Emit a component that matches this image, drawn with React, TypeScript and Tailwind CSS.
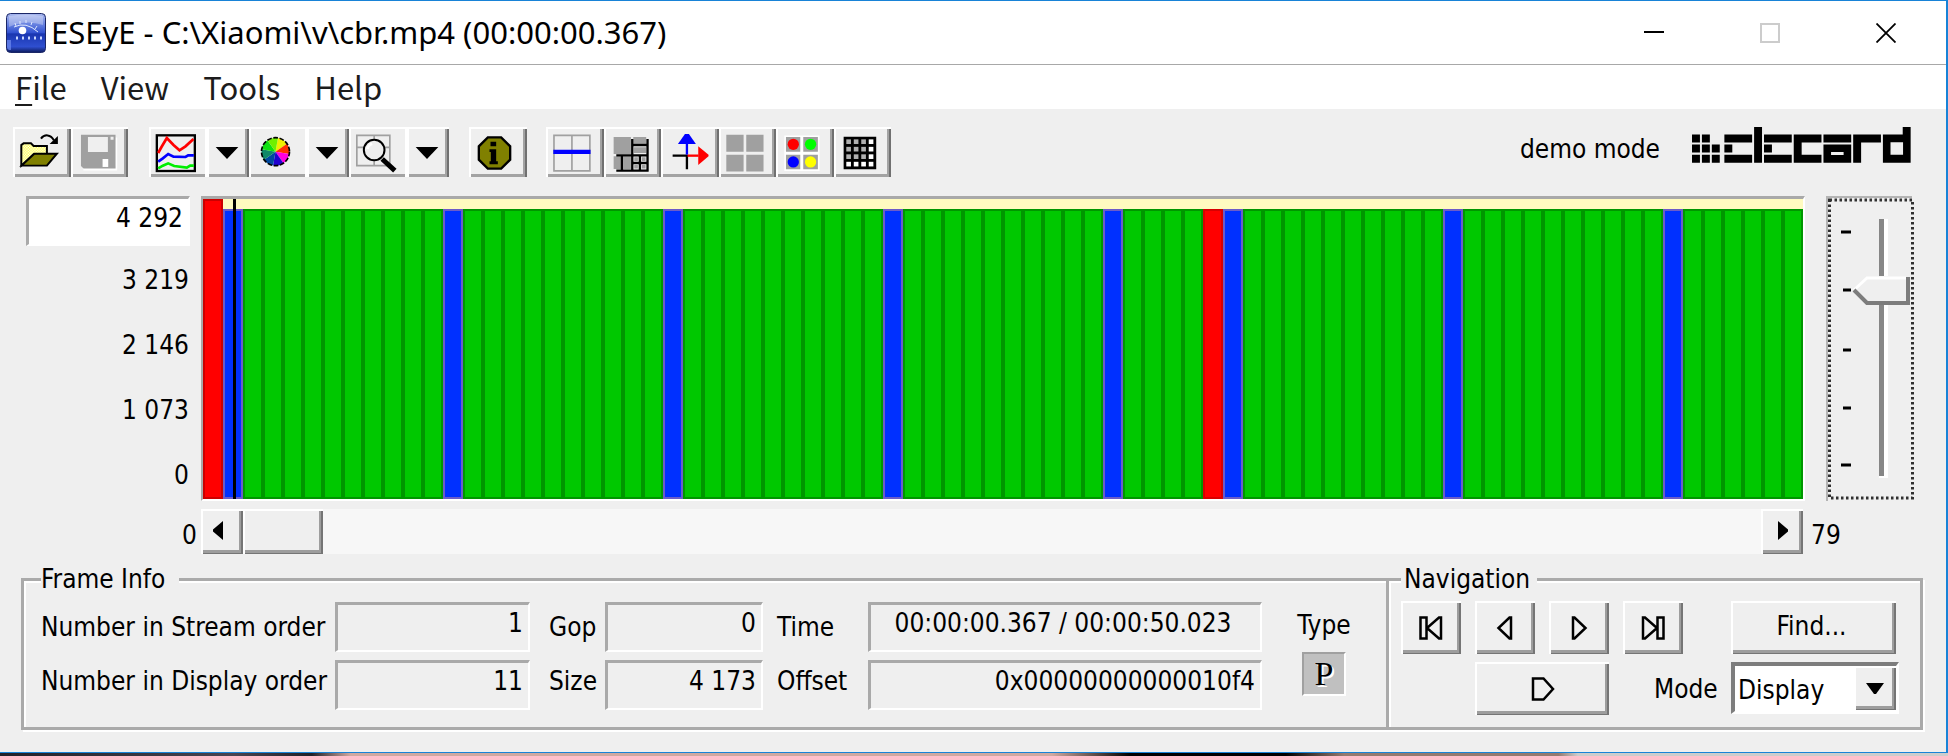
import React, { useState } from "react";

const RAISED =
  "bg-[#efefef] shadow-[inset_2px_2px_0_#ffffff,inset_-2px_-1px_0_#757575,inset_-4px_-4px_0_#9d9d9d]";
const TOOL =
  "block h-[50px] w-full bg-[#efefef] shadow-[inset_2px_2px_0_#ffffff,inset_-2px_0_0_#707070,inset_-4px_-3px_0_#a3a3a3]";
const TOOL_FLAT =
  "block h-[50px] w-full bg-[#efefef] shadow-[inset_2px_2px_0_#ffffff,inset_-2px_0_0_#ffffff,inset_0_-3px_0_#a3a3a3]";
const SUNKEN =
  "block h-[50px] border-t-[3px] border-l-[3px] border-r-2 border-b-2 border-t-[#a9a9a9] border-l-[#a9a9a9] border-r-white border-b-white pr-[5px] leading-[36px]";
const GROUP =
  "min-w-0 border-[3px] border-[#aaaaaa] shadow-[2px_2px_0_#ffffff,inset_2px_2px_0_#ffffff]";
const LEGEND = "bg-[#efefef] leading-[32px]";

type ToolProps = { label: string; box: string; flat?: boolean; children: React.ReactNode };

function Tool({ label, box, flat, children }: ToolProps) {
  return (
    <button type="button" aria-label={label} className={flat ? TOOL_FLAT : TOOL}>
      <svg viewBox={box} className="h-full w-full" aria-hidden="true">
        {children}
      </svg>
    </button>
  );
}

function SplitTool({ label, box, children }: ToolProps) {
  return (
    <div className="grid w-[100px] grid-cols-[58px_42px]">
      <Tool label={label} box={box} flat>
        {children}
      </Tool>
      <Tool label={label + " options"} box="0 0 126 150">
        <path d="M26 60H94L60 96Z" fill="#000" />
      </Tool>
    </div>
  );
}

const wedges = ["#f0f000", "#ff3000", "#ff00e0", "#2000d0", "#0048a0", "#108868", "#10e010", "#70f000"];

function wedgePath(i: number) {
  const a = ((i * 45 - 80) * Math.PI) / 180;
  const b = a + Math.PI / 4;
  const x = 826;
  const y = 454;
  const r = 42;
  return `M${x} ${y}L${x + r * Math.cos(a)} ${y + r * Math.sin(a)}A${r} ${r} 0 0 1 ${x + r * Math.cos(b)} ${y + r * Math.sin(b)}Z`;
}

function Toolbar() {
  return (
    <div className="flex items-start pr-[34px] pl-[13px]">
      <div className="grid w-[115px] grid-cols-2">
        <Tool label="Open" box="40 380 173 150">
          <defs>
            <pattern id="paper" width="8" height="8" patternUnits="userSpaceOnUse">
              <rect width="8" height="8" fill="#ffff40" />
              <rect width="4" height="4" fill="#fff" />
              <rect x="4" y="4" width="4" height="4" fill="#fff" />
            </pattern>
          </defs>
          <path d="M65 496V434L72 429H94L102 437H142V462H102Z" fill="url(#paper)" stroke="#000" strokeWidth="6" />
          <path d="M66 496L104 460H172L142 496Z" fill="#808000" stroke="#000" strokeWidth="6" />
          <path d="M124 415Q132 404 144 405Q156 406 163 420" fill="none" stroke="#000" strokeWidth="6" />
          <path d="M175 407V431H150Z" fill="#000" />
        </Tool>
        <Tool label="Save" box="213 380 173 150">
          <path d="M250 411H352V511H250Z" fill="#fff" />
          <path d="M243 403H347V505H251L243 497Z" fill="#a0a0a0" />
          <path d="M264 410H324V455H264ZM332 409H341V418H332Z" fill="#efefef" />
          <path d="M308 476H325V500H308Z" fill="#fff" />
        </Tool>
      </div>
      <div className="ml-[21px] flex">
        <SplitTool label="Chart type" box="447 380 173 150">
          <rect x="470" y="405" width="114" height="107" fill="#efefef" stroke="#000" strokeWidth="7" />
          <path d="M474 458L484 440L500 413L520 434L538 450L556 438L580 416" fill="none" stroke="#f00" strokeWidth="8" />
          <path d="M474 484L488 474L504 461L520 469L556 470L564 465H581" fill="none" stroke="#00f" strokeWidth="8" />
          <path d="M474 504L488 496L504 489L522 497L560 502L570 496H581" fill="none" stroke="#0e0" strokeWidth="8" />
        </SplitTool>
        <SplitTool label="Colours" box="747 380 173 150">
          {wedges.map((c, i) => (
            <path key={c} d={wedgePath(i)} fill={c} />
          ))}
          <circle cx="826" cy="454" r="42" fill="none" stroke="#000" strokeWidth="5" strokeDasharray="14 5" />
        </SplitTool>
        <SplitTool label="Zoom" box="1047 380 173 150">
          <path d="M1070 405H1169V496H1070ZM1122 405V496M1070 441H1169" fill="none" stroke="#a0a0a0" strokeWidth="5" />
          <path d="M1146 476L1184 511" stroke="#000" strokeWidth="15" />
          <circle cx="1122" cy="449" r="31" fill="#efefef" stroke="#000" strokeWidth="6" />
          <path d="M1102 446Q1104 434 1116 430" fill="none" stroke="#fff" strokeWidth="8" />
        </SplitTool>
      </div>
      <div className="ml-5 w-[58px]">
        <Tool label="Info" box="57 80 173 150">
          <path d="M113 111H153L180 138V178L153 205H113L86 178V138Z" fill="#808000" stroke="#000" strokeWidth="7" />
          <path d="M121 124H138V138H121ZM118 147H138V183H143V192H118V183H122V155H118Z" fill="#000" />
        </Tool>
      </div>
      <div className="ml-[19px] grid w-[345px] grid-cols-6">
        <Tool label="Slices" box="288 80 173 150">
          <path d="M312 105H420V212H312ZM366 105V212" fill="none" stroke="#a0a0a0" strokeWidth="5" />
          <path d="M310 148H422V161H310Z" fill="#00f" />
        </Tool>
        <Tool label="Partitions" box="461 80 173 150">
          <path d="M490 110H542V161H490ZM549 110H588V130H549ZM551 141H588V158H551ZM490 168H512V206H490ZM519 168H542V206H519Z" fill="#a0a0a0" />
          <path d="M546 116V214M592 116V214M546 134H594M498 165H594M515 165V212M498 211H595M546 188H592M569 165V211" fill="none" stroke="#000" strokeWidth="7" />
          <path d="M552 171H563V182H552ZM575 171H586V182H575ZM552 194H563V205H552ZM575 194H586V205H575Z" fill="#a0a0a0" />
        </Tool>
        <Tool label="Motion vectors" box="633 80 173 150">
          <path d="M668 166H712M711 163V207" stroke="#000" strokeWidth="7" />
          <path d="M711 128V163" stroke="#00f" strokeWidth="7" />
          <path d="M684 131H738L717 101H705Z" fill="#00f" />
          <path d="M713 166H746" stroke="#f00" strokeWidth="7" />
          <path d="M745 138V194L776 168V163Z" fill="#f00" />
        </Tool>
        <Tool label="Macroblocks" box="806 80 173 150">
          <path d="M828 103H880V154H828ZM888 103H940V154H888ZM828 163H880V214H828ZM888 163H940V214H888Z" fill="#a0a0a0" />
        </Tool>
        <Tool label="Block types" box="978 80 173 150">
          <path d="M1003 105H1109V212H1003Z" fill="#fff" />
          <path d="M1008 110H1051V154H1008ZM1060 110H1104V154H1060ZM1008 163H1051V207H1008ZM1060 163H1104V207H1060Z" fill="#a0a0a0" />
          <circle cx="1030" cy="132" r="17" fill="#f00" />
          <circle cx="1082" cy="132" r="17" fill="#0f0" />
          <circle cx="1030" cy="185" r="17" fill="#00f" />
          <circle cx="1082" cy="185" r="17" fill="#ff0" />
        </Tool>
        <Tool label="Grid" box="1151 80 173 150">
          <path d="M1180 109H1278V207H1180Z" fill="#000" />
          {[0, 1, 2, 3].map((r) =>
            [0, 1, 2, 3].map((c) => (
              <rect
                key={`${r}${c}`}
                x={1188 + c * 22.5}
                y={117 + r * 22.5}
                width="14"
                height="14"
                fill={r === 3 || c === 3 ? "#fff" : "#b0b0b0"}
              />
            )),
          )}
        </Tool>
      </div>
      <span className="mt-[5px] ml-auto leading-[34px]">demo mode</span>
      <svg viewBox="0 0 664 109" className="ml-[30px] h-9 w-[222px]" role="img" aria-label="elecard">
        <path
          d="M2 23H26V47H2ZM32 23H56V47H32ZM2 53H26V77H2ZM32 53H56V77H32ZM62 53H86V77H62ZM2 84H26V108H2ZM32 84H56V108H32ZM62 84H86V108H62Z
          M100 23H184V47H100ZM100 53H124V77H100ZM100 84H184V108H100ZM190 0H214V108H190Z
          M220 23H304V47H220ZM220 53H244V77H220ZM220 84H304V108H220Z
          M310 23H394V47H334V84H394V108H310Z
          M400 23H484V47H400ZM490 23H574V47H514V108H490Z"
        />
        <path
          fillRule="evenodd"
          d="M400 53H484V108H400ZM423 76V85H461V76ZM580 23H640V0H664V108H580ZM603 46V84H641V46Z"
        />
      </svg>
    </div>
  );
}

const BLUE = [1, 12, 23, 34, 45, 51, 62, 73];
const RED = [0, 50];

function frameClass(i: number) {
  if (i === 0) return "border-2 border-[#cc0000] bg-[#ff0000]";
  if (RED.includes(i)) return "mt-[10px] border-2 border-[#d80000] bg-[#ff0000]";
  if (BLUE.includes(i)) return "mt-[10px] border-2 border-[#6b5cc8] bg-[#0030ff]";
  return "mt-[10px] border-2 border-[#009600] bg-[#00c800]";
}

function Bars() {
  return (
    <div className="relative grid min-w-0 flex-1 grid-cols-[repeat(80,minmax(0,1fr))] border-t-[3px] border-r-2 border-b-2 border-l-2 border-t-[#a9a9a9] border-r-white border-b-white border-l-[#a9a9a9] bg-[#fffbc0]">
      {Array.from({ length: 80 }, (_, i) => (
        <div key={i} className={frameClass(i)} />
      ))}
      <div className="absolute inset-y-0 left-[1.875%] w-[3px] bg-black" />
    </div>
  );
}

function ZoomSlider() {
  return (
    <label className="relative block w-[88px]">
      <svg viewBox="0 0 88 305" className="h-full w-full" aria-hidden="true">
        <path d="M1 305V1H86" fill="none" stroke="#b4b4b4" strokeWidth="2" />
        <rect x="3.5" y="4" width="83" height="298" fill="none" stroke="#303030" strokeWidth="3" strokeDasharray="2.5 2.5" />
        <path d="M15 36H25M17 94H25M17 154H25M17 212H25M15 269H25" stroke="#000" strokeWidth="3" />
        <path d="M53 23H62V282H53Z" fill="#fff" />
        <path d="M53 23H58V280H53Z" fill="#868686" />
        <path d="M27 94L40 80H83V108H40Z" fill="#efefef" />
        <path d="M28 94L41 82H80" fill="none" stroke="#fff" strokeWidth="3" />
        <path d="M28 94L41 107H82V81" fill="none" stroke="#7c7c7c" strokeWidth="4" />
      </svg>
      <input
        type="range"
        aria-label="Vertical zoom"
        min={0}
        max={4}
        defaultValue={3}
        className="absolute inset-0 h-full w-full opacity-0 [writing-mode:vertical-lr] [direction:rtl]"
      />
    </label>
  );
}

function ScrollRow() {
  return (
    <div className="mt-2 flex h-[45px] pl-[26px]">
      <span className="w-[172px] pr-px text-right leading-[52px]">0</span>
      <div className="ml-[3px] flex min-w-0 flex-1 bg-[#f7f7f7]">
        <button type="button" aria-label="Scroll left" className={"w-[42px] " + RAISED}>
          <svg viewBox="0 0 42 45" className="h-full w-full" aria-hidden="true">
            <path d="M22 12V31L12 22.500V20.500Z" />
          </svg>
        </button>
        <div className={"w-20 " + RAISED} />
        <div className="flex-1" />
        <button type="button" aria-label="Scroll right" className={"w-[42px] " + RAISED}>
          <svg viewBox="0 0 42 45" className="h-full w-full" aria-hidden="true">
            <path d="M17 12V31L27 22.500V20.500Z" />
          </svg>
        </button>
      </div>
      <span className="w-[143px] pl-2 leading-[52px]">79</span>
    </div>
  );
}

type Field = { id: string; label: string; value: string; align?: string };

function FieldPair({ fields, labelWidth, fieldWidth }: { fields: Field[]; labelWidth: string; fieldWidth: string }) {
  return (
    <>
      <div className={"flex flex-none flex-col leading-[54px] " + labelWidth}>
        {fields.map((f) => (
          <label key={f.id} htmlFor={f.id}>
            {f.label}
          </label>
        ))}
      </div>
      <div className={"flex min-w-0 flex-col gap-2 pt-0.5 " + fieldWidth}>
        {fields.map((f) => (
          <output key={f.id} id={f.id} className={`${SUNKEN} ${f.align ?? "text-right"}`}>
            {f.value}
          </output>
        ))}
      </div>
    </>
  );
}

function NavButton({ label, d, className }: { label: string; d: string; className: string }) {
  return (
    <button type="button" aria-label={label} className={`flex h-[53px] items-center justify-center ${RAISED} ${className}`}>
      <svg viewBox="0 0 26 26" className="size-[26px]" fill="none" stroke="#000" strokeWidth="2.500" aria-hidden="true">
        <path d={d} />
      </svg>
    </button>
  );
}

function Panels() {
  const [mode, setMode] = useState("Display");
  return (
    <div className="mt-[9px] flex pr-[23px] pl-[21px]">
      <fieldset className={"flex-1 border-r-0 pl-[17px] " + GROUP}>
        <legend className={LEGEND + " pr-[14px]"}>Frame Info</legend>
        <div className="flex pt-[5px] pb-[17px]">
          <FieldPair
            labelWidth="w-[294px]"
            fieldWidth="w-[195px] flex-none"
            fields={[
              { id: "stream", label: "Number in Stream order", value: "1" },
              { id: "display", label: "Number in Display order", value: "11" },
            ]}
          />
          <FieldPair
            labelWidth="ml-[19px] w-14"
            fieldWidth="w-[158px] flex-none"
            fields={[
              { id: "gop", label: "Gop", value: "0" },
              { id: "size", label: "Size", value: "4 173" },
            ]}
          />
          <FieldPair
            labelWidth="ml-[14px] w-[91px]"
            fieldWidth="flex-1"
            fields={[
              { id: "time", label: "Time", value: "00:00:00.367 / 00:00:50.023", align: "text-center" },
              { id: "offset", label: "Offset", value: "0x00000000000010f4" },
            ]}
          />
          <div className="flex w-[124px] flex-none flex-col items-center">
            <span className="leading-[50px]">Type</span>
            <output className="mt-[2px] size-11 border-2 border-t-[#a0a0a0] border-r-white border-b-white border-l-[#a0a0a0] bg-[#c0c0c0] text-center font-['Liberation_Serif',serif] text-[34px] leading-[40px] [text-shadow:2px_2px_0_#ffffff]">
              P
            </output>
          </div>
        </div>
      </fieldset>
      <fieldset className={"w-[537px] flex-none pl-3 " + GROUP}>
        <legend className={LEGEND + " pr-[7px] pl-[3px]"}>Navigation</legend>
        <div className="flex pt-[6px]">
          <div className="flex gap-[14px]">
            <NavButton label="First frame" className="w-[60px]" d="M2.500 2.500H8.500V23.500H2.500ZM23 2.500V23.500H21L9 13L21 2.500Z" />
            <NavButton label="Previous frame" className="w-[60px]" d="M19 2.500V23.500H17.500L6.500 13L17.500 2.500Z" />
            <NavButton label="Next frame" className="w-[60px]" d="M7 2.500V23.500H8.500L19.500 13L8.500 2.500Z" />
            <NavButton label="Last frame" className="w-[60px]" d="M3 2.500V23.500H5L17 13L5 2.500ZM17.500 2.500H23.500V23.500H17.500Z" />
          </div>
          <button type="button" className={"ml-12 h-[53px] w-[165px] pr-1 pb-[2px] " + RAISED}>
            Find...
          </button>
        </div>
        <div className="flex pt-2 pl-[74px]">
          <NavButton label="Play" className="w-[134px]" d="M4 2.500H14.500L24 13L14.500 23.500H4Z" />
          <label htmlFor="mode" className="ml-[45px] w-[77px] leading-[54px]">
            Mode
          </label>
          <div className="relative h-[52px] w-[168px]">
            <select
              id="mode"
              value={mode}
              onChange={(e) => setMode(e.target.value)}
              className="h-full w-full appearance-none border-t-4 border-r-[3px] border-b-[3px] border-l-4 border-t-[#7d7d7d] border-r-white border-b-white border-l-[#7d7d7d] bg-white pt-[3px] pl-[3px] outline-none"
            >
              <option>Display</option>
              <option>Stream</option>
            </select>
            <span className={"pointer-events-none absolute inset-y-1 right-[3px] w-[42px] " + RAISED}>
              <svg viewBox="0 0 42 44" className="h-full w-full" aria-hidden="true">
                <path d="M12 17H30L22 28H20Z" />
              </svg>
            </span>
          </div>
        </div>
      </fieldset>
    </div>
  );
}

function TitleBar() {
  return (
    <header className="flex h-[64px] items-center border-b border-[#a8a8a8] bg-white pr-[50px] pl-1.5 font-['Noto_Sans',sans-serif] text-[31px]">
      <svg viewBox="0 0 40 40" className="mr-[5px] size-10" aria-hidden="true">
        <defs>
          <linearGradient id="face" x1="0" y1="0" x2="0" y2="1">
            <stop offset="0" stopColor="#a9b8ee" />
            <stop offset="0.25" stopColor="#6f88e2" />
            <stop offset="0.5" stopColor="#2f50d0" />
            <stop offset="0.52" stopColor="#1a36b0" />
            <stop offset="0.85" stopColor="#2f4fd0" />
            <stop offset="1" stopColor="#0c1a5c" />
          </linearGradient>
        </defs>
        <rect x="0.500" y="0.500" width="39" height="39" rx="4" fill="url(#face)" stroke="#1b2767" />
        <path d="M3 3Q20 0 37 3V12Q20 6 3 14Z" fill="#fff" opacity="0.3" />
        <path d="M8 14Q20 8 32 19" fill="none" stroke="#dfe8ff" strokeWidth="1" />
        <path d="M9 10L10 13M14 8V11M20 7V10M26 9L25 12M31 13L29 16" stroke="#dfe8ff" strokeWidth="1" />
        <circle cx="16.500" cy="17.500" r="3.800" fill="#fff" />
        <path d="M10 25H36" stroke="#c9d6ff" strokeWidth="3" strokeDasharray="2 4" />
        <path d="M1 27H5V37H3Q1 36 1 34Z" fill="#6f8cf0" opacity="0.7" />
      </svg>
      <h1>ESEyE - C:\Xiaomi\v\cbr.mp4 (00:00:00.367)</h1>
      <div className="ml-auto flex gap-24">
        <button type="button" aria-label="Minimize">
          <svg viewBox="0 0 20 20" className="size-5" aria-hidden="true">
            <path d="M0 9H20" stroke="#000" strokeWidth="2" />
          </svg>
        </button>
        <button type="button" aria-label="Maximize" disabled>
          <svg viewBox="0 0 20 20" className="size-5" aria-hidden="true">
            <rect x="1" y="1" width="18" height="18" fill="none" stroke="#cccccc" strokeWidth="2" />
          </svg>
        </button>
        <button type="button" aria-label="Close">
          <svg viewBox="0 0 20 20" className="size-5" aria-hidden="true">
            <path d="M0.500 0.500L19.500 19.500M19.500 0.500L0.500 19.500" stroke="#000" strokeWidth="1.800" />
          </svg>
        </button>
      </div>
    </header>
  );
}

export default function App() {
  return (
    <div className="w-full text-[26px] text-black font-['DejaVu_Sans_Condensed','DejaVu_Sans',sans-serif]">
      <div className="border-t border-r-2 border-b border-[#1883d7] bg-[#efefef] pb-[22px]">
        <TitleBar />
        <nav className="flex h-11 items-center gap-[34px] bg-white pl-[15px] text-[31px] leading-[44px] text-[#1c1c1c] font-['Noto_Sans_CJK_SC',sans-serif]">
          <button type="button">
            <span className="underline decoration-2 underline-offset-4">F</span>ile
          </button>
          <button type="button">View</button>
          <button type="button">Tools</button>
          <button type="button">Help</button>
        </nav>
        <div className="pt-[18px]">
          <Toolbar />
        </div>
        <main>
          <div className="mt-[19px] flex pr-8 pl-[26px]">
            <div className="mr-[11px] flex h-[305px] w-[164px] flex-none flex-col text-right">
              <input
                type="text"
                aria-label="Maximum size"
                defaultValue="4 292"
                className="h-[50px] w-full flex-none border-t-[3px] border-r-2 border-b-2 border-l-[3px] border-t-[#a9a9a9] border-r-white border-b-white border-l-[#a9a9a9] bg-white pr-[5px] pb-[8px] text-right outline-none"
              />
              {["3 219", "2 146", "1 073", "0"].map((v) => (
                <span key={v} className="h-[65px] flex-none pr-px leading-[68px]">
                  {v}
                </span>
              ))}
            </div>
            <Bars />
            <div className="ml-[21px] flex">
              <ZoomSlider />
            </div>
          </div>
          <ScrollRow />
          <Panels />
        </main>
      </div>
      <div className="h-[3px] bg-[linear-gradient(90deg,#202028_0%,#4a4450_12%,#202028_16%,#d0a8a0_18%,#d0a8a0_54%,#000000_58%,#000000_66%,#957a70_69%,#957a70_80%,#cccccc_81%)]" />
    </div>
  );
}
